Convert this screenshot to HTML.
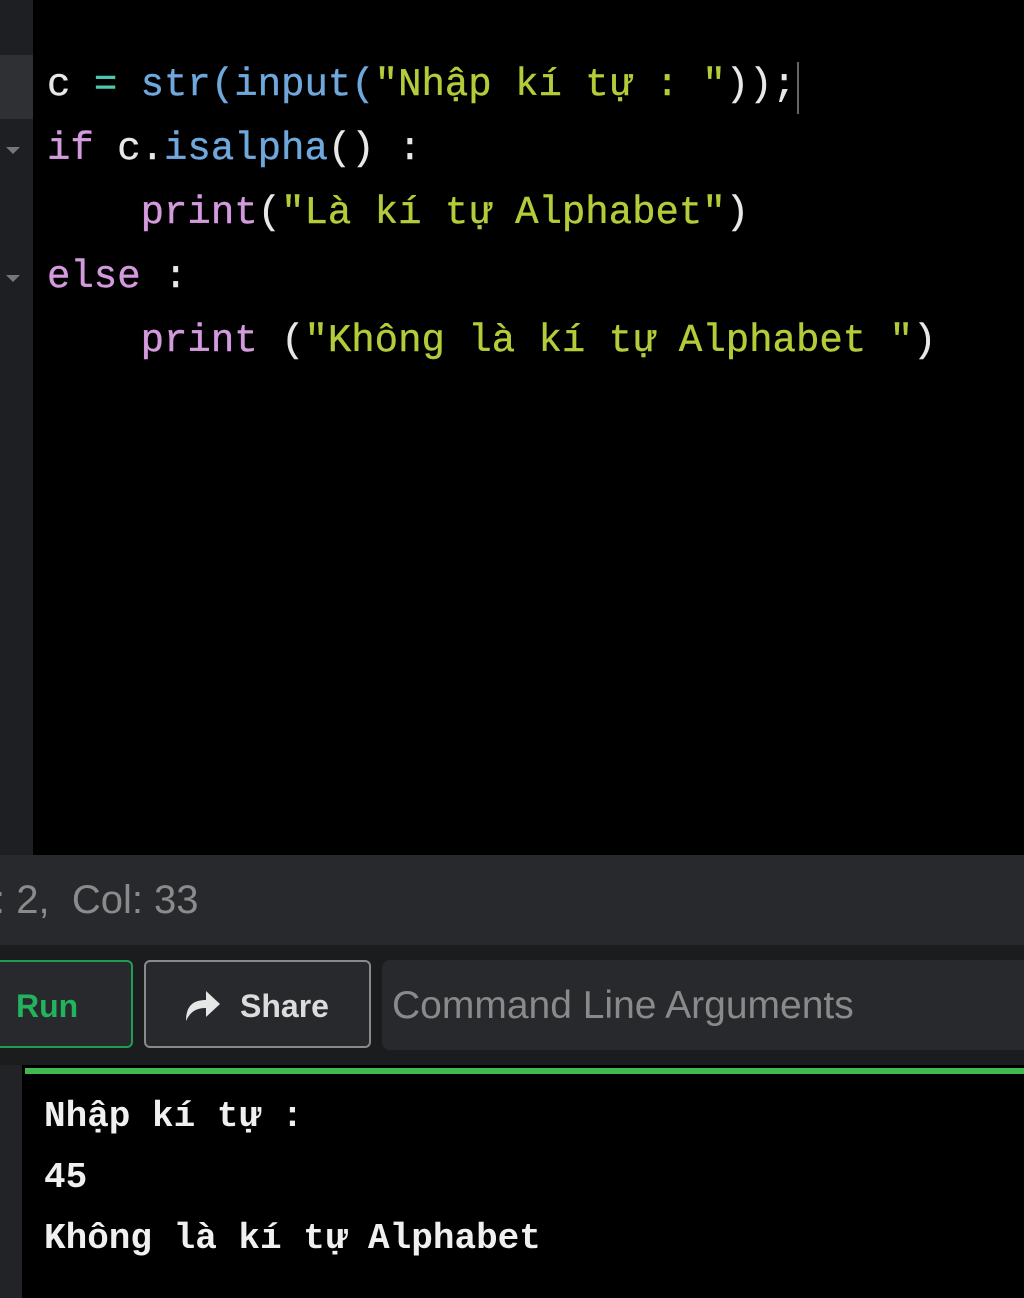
<!DOCTYPE html>
<html><head><meta charset="utf-8"><style>
body{margin:0;width:1024px;height:1298px;overflow:hidden;background:#000;position:relative;font-family:"Liberation Mono","DejaVu Sans Mono",monospace}
.gut{position:absolute;left:0;top:0;width:33px;height:855px;background:#1e1f22}
.hl{position:absolute;left:0;top:55px;width:33px;height:64px;background:#2e3034}
.code{position:absolute;left:47px;top:0;font-size:39px;white-space:pre;color:#dcdcdc;-webkit-text-stroke:0.4px currentColor}
.code div{position:absolute;left:0;height:64px;line-height:64px}
.b{color:#6fa8dc}.g{color:#b5cc3a}.k{color:#d49ade}.op{color:#4ec9b0}.w{color:#e8e8e8}
.arr{position:absolute;left:6px;width:0;height:0;border-left:7px solid transparent;border-right:7px solid transparent;border-top:7px solid #777}
.status{position:absolute;left:0;top:855px;width:1024px;height:90px;background:#28292c;color:#8b8b8b;font-family:"Liberation Sans",sans-serif;font-size:40px;line-height:90px;white-space:pre}
.bar{position:absolute;left:0;top:945px;width:1024px;height:120px;background:#1b1c1e}
.btn{position:absolute;top:960px;height:88px;border-radius:6px;background:#28292c;font-family:"Liberation Sans",sans-serif;font-weight:bold;font-size:32px;line-height:88px;box-sizing:border-box}
.inp{position:absolute;left:382px;top:960px;width:660px;height:90px;border-radius:8px;background:#28292c;color:#8a8a8a;font-family:"Liberation Sans",sans-serif;font-size:39px;line-height:92px;padding-left:10px;box-sizing:border-box;white-space:nowrap}
.og{position:absolute;left:0;top:1065px;width:22px;height:233px;background:#222326}
.line{position:absolute;left:25px;top:1068px;width:1000px;height:6px;background:#3fb950}
.out{position:absolute;left:44px;color:#f0f0f0;font-size:36px;font-weight:bold;white-space:pre}
</style></head><body>
<div class="gut"></div><div class="hl"></div>
<div class="arr" style="top:147px"></div><div class="arr" style="top:275px"></div>
<div class="code">
<div style="top:53px"><span class="w">c</span> <span class="op">=</span> <span class="b">str(input(</span><span class="g">"Nhập kí tự : "</span><span class="w">))</span><span class="w">;</span></div>
<div style="top:117px"><span class="k">if</span> <span class="w">c.</span><span class="b">isalpha</span><span class="w">()</span> <span class="w">:</span></div>
<div style="top:181px">    <span class="k">print</span><span class="w">(</span><span class="g">"Là kí tự Alphabet"</span><span class="w">)</span></div>
<div style="top:245px"><span class="k">else</span> <span class="w">:</span></div>
<div style="top:309px">    <span class="k">print</span> <span class="w">(</span><span class="g">"Không là kí tự Alphabet "</span><span class="w">)</span></div>
</div>
<div style="position:absolute;left:797px;top:62px;width:2px;height:52px;background:#666"></div>
<div class="status"><span style="position:absolute;left:-6px">: 2,  Col: 33</span></div>
<div class="bar"></div>
<div class="btn" style="left:-10px;width:143px;border:2px solid #1f9d55;color:#22b35e;padding-left:24px">Run</div>
<div class="btn" style="left:144px;width:227px;border:2px solid #8a8a8a;color:#dcdcdc;padding-left:94px">Share</div>
<svg style="position:absolute;left:182px;top:987px" width="40" height="36" viewBox="0 0 40 36"><path d="M4 34 C4 18 12 13 24 13 L24 4 L38 17 L24 30 L24 21 C14 21 8 25 4 34Z" fill="#e6e6e6"/></svg>
<div class="inp">Command Line Arguments</div>
<div class="og"></div><div class="line"></div>
<div class="out" style="top:1096px">Nhập kí tự :</div>
<div class="out" style="top:1157px">45</div>
<div class="out" style="top:1218px">Không là kí tự Alphabet</div>
</body></html>
